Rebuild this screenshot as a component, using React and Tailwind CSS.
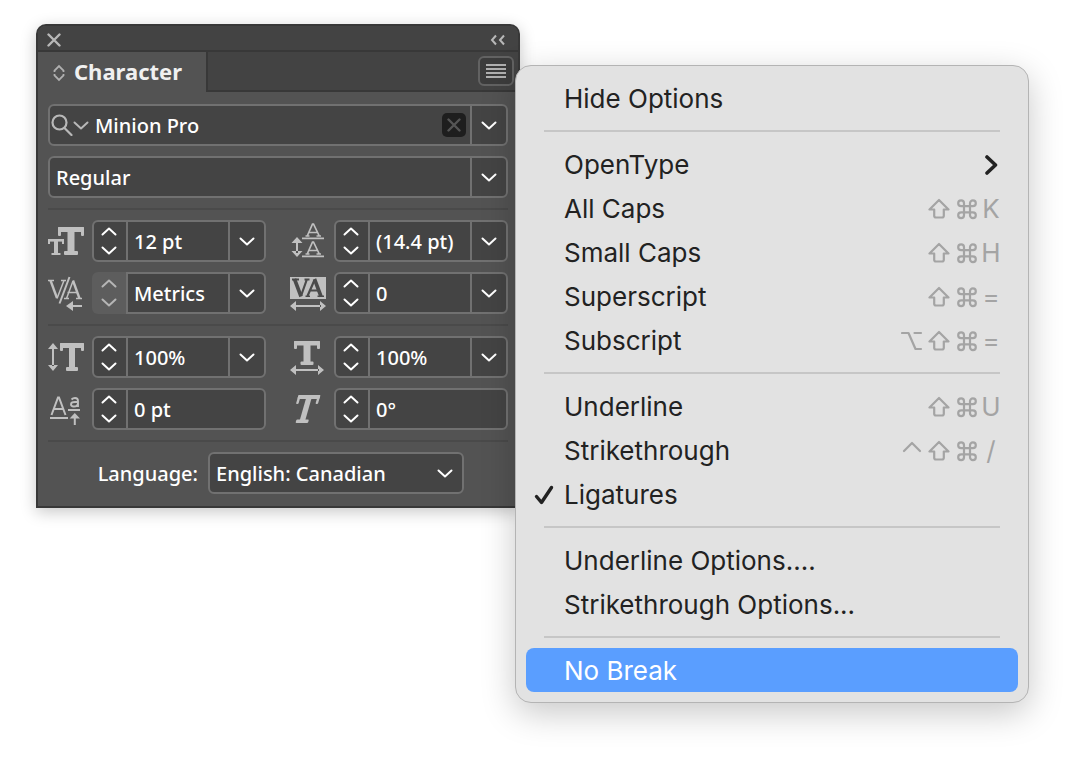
import { useState } from "react";

function Glyph({ children }) {
  return (
    <svg viewBox="0 0 36 42" className="h-[42px] w-9 shrink-0 fill-[#c0c0c0] stroke-none" aria-hidden="true">
      {children}
    </svg>
  );
}

function Strokes({ d, width = 1.8 }) {
  return <path d={d} fill="none" stroke="#c0c0c0" strokeWidth={width} />;
}

const SizeIcon = () => (
  <Glyph>
    <rect x="10" y="7" width="26" height="5" rx="1" />
    <rect x="10" y="7" width="3" height="9" rx="1" />
    <rect x="33" y="7" width="3" height="9" rx="1" />
    <rect x="19.500" y="7" width="7" height="28" />
    <rect x="16" y="31" width="14" height="4" rx="1" />
    <rect x="0" y="19" width="16" height="2.600" />
    <rect x="0" y="19" width="2" height="5" />
    <rect x="14" y="19" width="2" height="5" />
    <rect x="6" y="19" width="4" height="16" />
    <rect x="3.500" y="33" width="9" height="2" />
  </Glyph>
);

const LeadingIcon = () => (
  <Glyph>
    <Strokes width={1.7} d="M17 16.500L22.500 4h1L29.500 16.500M19 12.500h8.500M15.500 16h4M26.500 16h4.500" />
    <Strokes width={1.7} d="M17 34.500L22.500 22h1L29.500 34.500M19 30.500h8.500M15.500 34h4M26.500 34h4.500" />
    <path d="M12 17.500h22v1.800H12zM12 35.500h22v1.800H12zM6 21h2v12H6zM7 17l5.500 6h-11zM7 37l5.500-6h-11z" />
  </Glyph>
);

const KerningIcon = () => (
  <Glyph>
    <Strokes width={2.4} d="M2.500 8.500L9 26" />
    <Strokes width={1.5} d="M9 26.500L16 8.500M0 8.500h6M13 8.500h5" />
    <Strokes width={2} d="M21.500 5L11.500 31.500" />
    <Strokes width={1.5} d="M18.500 26.500L25 9M19.500 20.500h10M16 26.500h5M28 26.500h6" />
    <Strokes width={2.4} d="M25 8.500L31.500 26.500" />
    <path d="M24 33h10v2H24zM18 34l7-5v10z" />
  </Glyph>
);

const TrackingIcon = () => (
  <Glyph>
    <path d="M0 5h36v22H0zM5 33h26v2H5zM0 34l6-5v10zM36 34l-6-5v10z" />
    <g fill="none" stroke="#4a4a4a">
      <path strokeWidth="3.600" d="M4.500 7L11 24.500" />
      <path strokeWidth="2.200" d="M11 24L17 7M2 7.500h7M14.500 7.500h5M17.500 24L24.500 8M20 18.500h8" />
      <path strokeWidth="3.600" d="M24.500 7L31 24.500" />
      <path strokeWidth="1.600" d="M15.500 24.300h4.500M27.500 24.300h6.500" />
    </g>
  </Glyph>
);

const VerticalScaleIcon = () => (
  <Glyph>
    <rect x="12" y="7" width="24" height="5" rx="1" />
    <rect x="12" y="7" width="3" height="8" rx="1" />
    <rect x="33" y="7" width="3" height="8" rx="1" />
    <rect x="21" y="7" width="6" height="28" />
    <rect x="18" y="31" width="12" height="4" rx="1" />
    <path d="M4 12h2v18H4zM5 7l5 6H0zM5 35l5-6H0z" />
  </Glyph>
);

const HorizontalScaleIcon = () => (
  <Glyph>
    <rect x="4" y="5" width="26" height="4.500" rx="1" />
    <rect x="4" y="5" width="3" height="8" rx="1" />
    <rect x="27" y="5" width="3" height="8" rx="1" />
    <rect x="13.500" y="5" width="7" height="24" />
    <rect x="10.500" y="25.500" width="13" height="3.500" rx="1" />
    <path d="M5 33h24v2H5zM0 34l6-5v10zM34 34l-6-5v10z" />
  </Glyph>
);

const BaselineIcon = () => (
  <Glyph>
    <Strokes width={2} d="M3.500 27L10 9.500h1L17.500 27M6 21h9.500" />
    <Strokes width={1.9} d="M23.500 11.500c1-1 2-1.500 3.500-1.500 2 0 3 1 3 3v6M30 14h-3c-3 0-4 .8-4 2.300 0 1.400 1 2.200 2.700 2.200C28 18.500 30 17.500 30 15" />
    <path d="M2 29h18v2H2zM20 21h12v2H20zM25.800 28h2v9h-2zM26.800 25l5.200 5.500H21.600z" />
  </Glyph>
);

const SkewIcon = () => (
  <Glyph>
    <g transform="translate(11.500 0) skewX(-16)">
      <rect x="-1" y="7" width="22" height="4" rx="1" />
      <rect x="-1" y="7" width="2.500" height="9" rx="1" />
      <rect x="18.500" y="7" width="2.500" height="9" rx="1" />
      <rect x="7.500" y="7" width="5.500" height="28" />
      <rect x="4" y="31.500" width="12.500" height="3.500" rx="1" />
    </g>
  </Glyph>
);

function Chevron({ up = false }) {
  return (
    <svg viewBox="0 0 16 9" className="h-[9px] w-4 shrink-0" fill="none" stroke="currentColor" strokeWidth="2" strokeLinecap="round" strokeLinejoin="round" aria-hidden="true">
      <path d={up ? "M1.500 7.500L8 1.500l6.500 6" : "M1.500 1.500L8 7.500l6.500-6"} />
    </svg>
  );
}

function Cross({ className }) {
  return (
    <svg viewBox="0 0 14 14" className={className} fill="none" stroke="currentColor" strokeWidth="2.400" strokeLinecap="round" aria-hidden="true">
      <path d="M1.500 1.500l11 11M12.500 1.500l-11 11" />
    </svg>
  );
}

function DropButton({ label }) {
  return (
    <button type="button" aria-label={label} className="flex w-9 shrink-0 items-center justify-center border-l-2 border-[#717171]">
      <Chevron />
    </button>
  );
}

const FIELD = "flex h-[42px] min-w-0 flex-1 overflow-hidden rounded-md border-2 border-[#717171] bg-[#444444]";
const INPUT = "w-full min-w-0 flex-1 bg-transparent pt-0.5 pl-1.5 outline-none";

function NumberField({ icon, label, value, drop = true, dim = false }) {
  return (
    <div className="flex min-w-0 gap-2">
      {icon}
      <div className={dim ? "flex h-[42px] min-w-0 flex-1 rounded-md bg-[#5d5d5d]" : FIELD}>
        <div className={dim ? "flex w-[34px] shrink-0 flex-col py-0.5 text-[#b5b5b5]" : "flex w-8 shrink-0 flex-col pr-0.5"}>
          <button type="button" aria-label={label + " up"} className="flex flex-1 items-center justify-center">
            <Chevron up />
          </button>
          <button type="button" aria-label={label + " down"} className="flex flex-1 items-center justify-center">
            <Chevron />
          </button>
        </div>
        <div className={dim ? "flex min-w-0 flex-1 rounded-r-md border-2 border-[#717171] bg-[#444444]" : "flex min-w-0 flex-1 border-l-2 border-[#717171]"}>
          <input aria-label={label} defaultValue={value} className={INPUT} />
          {drop && <DropButton label={label + " presets"} />}
        </div>
      </div>
    </div>
  );
}

function Divider() {
  return <hr className="h-0.5 border-0 bg-[#4a4a4a]" />;
}

const KEY_PATHS = {
  shift: "M11 2L1.500 11.500h4.700v6.300q0 1.700 1.700 1.700h6.200q1.700 0 1.700-1.700v-6.300h4.700z",
  command: "M9 5.300v11.900a2.900 2.900 0 1 1-2.900-2.900h11.800a2.900 2.900 0 1 1-2.900 2.900V5.300a2.900 2.900 0 1 1 2.900 2.900H6.100A2.900 2.900 0 1 1 9 5.300z",
  option: "M1 3h6.500l7 16H20M13.500 3H20",
  control: "M3 11l8-8 8 8",
};

function KeySymbol({ name }) {
  return (
    <svg viewBox="0 0 22 22" className="size-[22px] shrink-0" fill="none" stroke="currentColor" strokeWidth="2.200" strokeLinecap="round" strokeLinejoin="round" aria-hidden="true">
      <path d={KEY_PATHS[name]} />
    </svg>
  );
}

function MenuItem({ label, keys = [], letter, checked = false, submenu = false, active = false }) {
  return (
    <button
      type="button"
      role="menuitem"
      className={
        active
          ? "flex h-11 w-full items-center rounded-lg bg-[#5a9eff] pt-0.5 pr-[18px] text-left text-white"
          : "flex h-11 w-full items-center rounded-lg pt-0.5 pr-[18px] text-left"
      }
    >
      <span className="flex w-[38px] shrink-0 pl-2">
        {checked && (
          <svg viewBox="0 0 20 20" className="size-5" fill="none" stroke="currentColor" strokeWidth="3.400" strokeLinecap="round" strokeLinejoin="round" aria-hidden="true">
            <path d="M2.500 11.500l5 6L17.500 2.500" />
          </svg>
        )}
      </span>
      <span className="flex-1 whitespace-nowrap">{label}</span>
      {letter && (
        <span className="flex items-center gap-[5px] text-[#a4a4a4]">
          {keys.map((k) => (
            <KeySymbol key={k} name={k} />
          ))}
          <span className="flex w-[18px] justify-center">{letter}</span>
        </span>
      )}
      {submenu && (
        <svg viewBox="0 0 16 20" className="h-5 w-4" fill="none" stroke="currentColor" strokeWidth="3.600" strokeLinecap="round" strokeLinejoin="round" aria-hidden="true">
          <path d="M3 2l8.500 8L3 18" />
        </svg>
      )}
    </button>
  );
}

function Separator() {
  return <hr className="mx-[18px] my-[10px] h-0.5 border-0 bg-[#c6c6c6]" />;
}

function PanelMenu() {
  return (
    <div
      role="menu"
      className="absolute top-[39px] left-[477px] w-[514px] rounded-2xl border border-[#b4b4b4] bg-[#e2e2e2] p-[10px] font-['Inter',sans-serif] text-[26px] font-normal text-[#222222] shadow-[0_10px_34px_rgba(0,0,0,0.22)]"
    >
      <MenuItem label="Hide Options" />
      <Separator />
      <MenuItem label="OpenType" submenu />
      <MenuItem label="All Caps" keys={["shift", "command"]} letter="K" />
      <MenuItem label="Small Caps" keys={["shift", "command"]} letter="H" />
      <MenuItem label="Superscript" keys={["shift", "command"]} letter="=" />
      <MenuItem label="Subscript" keys={["option", "shift", "command"]} letter="=" />
      <Separator />
      <MenuItem label="Underline" keys={["shift", "command"]} letter="U" />
      <MenuItem label="Strikethrough" keys={["control", "shift", "command"]} letter="/" />
      <MenuItem label="Ligatures" checked />
      <Separator />
      <MenuItem label="Underline Options...." />
      <MenuItem label="Strikethrough Options..." />
      <Separator />
      <MenuItem label="No Break" active />
    </div>
  );
}

export default function App() {
  const [open, setOpen] = useState(true);
  return (
    <main className="min-h-screen bg-white px-9 py-6">
      <section className="relative w-full max-w-[484px] rounded-t-[10px] border-2 border-[#383838] bg-[#535353] font-['Noto_Sans',sans-serif] text-xl font-medium text-white shadow-[0_4px_16px_rgba(0,0,0,0.22)]">
        <header className="flex h-[26px] items-center justify-between rounded-t-lg border-b-2 border-[#383838] bg-[#434343] pt-1 pr-3 pl-[9px] text-[#b8b8b8]">
          <button type="button" aria-label="Close">
            <Cross className="size-3.5" />
          </button>
          <button type="button" aria-label="Collapse">
            <svg viewBox="0 0 16 12" className="h-3 w-4" fill="none" stroke="currentColor" strokeWidth="2" aria-hidden="true">
              <path d="M6 1.500L2 6l4 4.500M14 1.500L10 6l4 4.500" />
            </svg>
          </button>
        </header>

        <div className="flex h-10">
          <h1 className="flex w-[168px] shrink-0 items-center gap-2 pb-0.5 pl-[14px] text-[22px] font-bold text-[#f0f0f0]">
            <svg viewBox="0 0 14 18" className="mt-1 h-[18px] w-3.5 text-[#b0b0b0]" fill="none" stroke="currentColor" strokeWidth="1.800" aria-hidden="true">
              <path d="M2.500 8V6.500L7 2l4.500 4.500V8M2.500 10v1.500L7 16l4.500-4.500V10" />
            </svg>
            Character
          </h1>
          <div className="flex flex-1 items-start justify-end border-b-2 border-l-2 border-[#383838] bg-[#434343] pt-1 pr-1">
            <button
              type="button"
              aria-label="Panel menu"
              aria-expanded={open}
              onClick={() => setOpen(!open)}
              className="flex h-[30px] w-9 items-center justify-center rounded-md border-2 border-[#626262] bg-[#3c3c3c]"
            >
              <svg viewBox="0 0 20 14" className="h-3.5 w-5 fill-[#b0b0b0]" aria-hidden="true">
                <path d="M0 0h20v2H0zM0 4h20v2H0zM0 8h20v2H0zM0 12h20v2H0z" />
              </svg>
            </button>
          </div>
        </div>

        <form className="flex flex-col gap-[10px] px-[10px] py-3" onSubmit={(e) => e.preventDefault()}>
          <div className="flex">
            <div className={FIELD}>
              <button type="button" aria-label="Search fonts" className="flex shrink-0 items-center pl-px text-[#b8b8b8]">
                <svg viewBox="0 0 22 22" className="size-[22px]" fill="none" stroke="currentColor" strokeWidth="2.200" strokeLinecap="round" aria-hidden="true">
                  <circle cx="8.500" cy="8.500" r="7" />
                  <path d="M13.500 14l7 7" />
                </svg>
                <Chevron />
              </button>
              <input aria-label="Font family" defaultValue="Minion Pro" className={INPUT} />
              <button type="button" aria-label="Clear font" className="mr-1 flex size-6 shrink-0 items-center justify-center self-center rounded-[5px] bg-[#1e1e1e] text-[#555555]">
                <Cross className="size-3.5" />
              </button>
              <DropButton label="Font list" />
            </div>
          </div>

          <div className="flex">
            <div className={FIELD}>
              <input aria-label="Font style" defaultValue="Regular" className={INPUT} />
              <DropButton label="Style list" />
            </div>
          </div>

          <Divider />

          <div className="grid grid-cols-2 gap-x-6 gap-y-[10px]">
            <NumberField icon={<SizeIcon />} label="Font size" value="12 pt" />
            <NumberField icon={<LeadingIcon />} label="Leading" value="(14.4 pt)" />
            <NumberField icon={<KerningIcon />} label="Kerning" value="Metrics" dim />
            <NumberField icon={<TrackingIcon />} label="Tracking" value="0" />
          </div>

          <Divider />

          <div className="grid grid-cols-2 gap-x-6 gap-y-[10px]">
            <NumberField icon={<VerticalScaleIcon />} label="Vertical scale" value="100%" />
            <NumberField icon={<HorizontalScaleIcon />} label="Horizontal scale" value="100%" />
            <NumberField icon={<BaselineIcon />} label="Baseline shift" value="0 pt" drop={false} />
            <NumberField icon={<SkewIcon />} label="Skew" value="0°" drop={false} />
          </div>

          <Divider />

          <div className="flex items-center justify-end gap-[10px] pr-11">
            <label htmlFor="language" className="pt-0.5">Language:</label>
            <div className="relative w-64">
              <select id="language" defaultValue="English: Canadian" className="h-[42px] w-full appearance-none rounded-md border-2 border-[#717171] bg-[#444444] pt-0.5 pl-1.5 outline-none">
                <option>English: Canadian</option>
                <option>English: USA</option>
                <option>English: UK</option>
              </select>
              <span className="pointer-events-none absolute inset-y-0 right-[11px] flex items-center">
                <Chevron />
              </span>
            </div>
          </div>
        </form>

        {open && <PanelMenu />}
      </section>
    </main>
  );
}
